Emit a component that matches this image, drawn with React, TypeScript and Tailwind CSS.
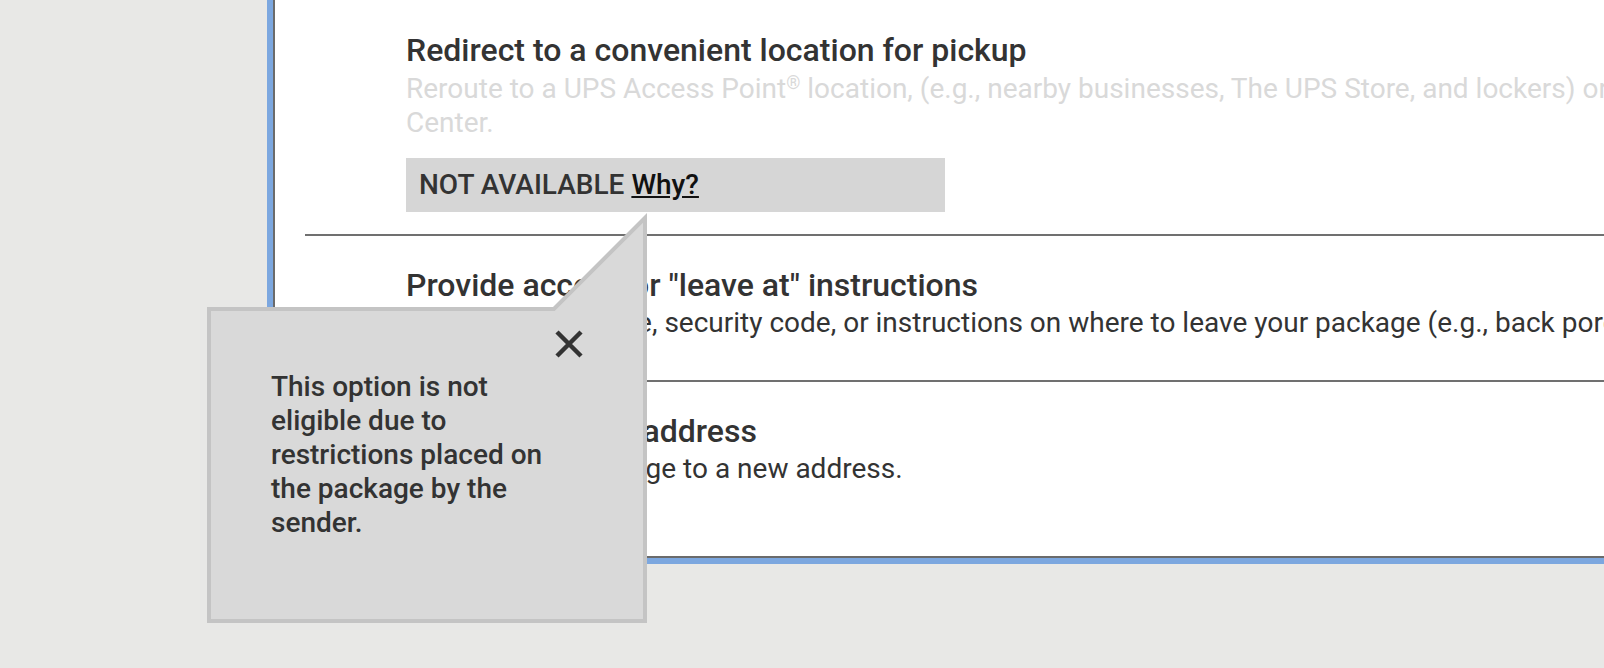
import React from 'react'

const font = { fontFamily: 'Roboto, "Noto Sans", Arial, sans-serif' }

interface OptionProps {
  title: string
  children: React.ReactNode
  last?: boolean
  className?: string
}

function Option({ title, children, last, className }: OptionProps) {
  return (
    <div className={`pl-[101px] ${last ? '' : 'border-b-2 border-[#707070]'} ${className ?? ''}`}>
      <div className="text-[32px] leading-[38px] font-medium text-[#333333] whitespace-nowrap">{title}</div>
      {children}
    </div>
  )
}

function CloseIcon() {
  return (
    <svg width="28" height="28" viewBox="0 0 28 28">
      <path d="M2 2 L26 26 M26 2 L2 26" stroke="#333333" strokeWidth="4.5" fill="none" />
    </svg>
  )
}

function WhyPopover() {
  return (
    <div className="absolute left-[207px] top-[213px] w-[440px]">
      <svg className="absolute right-0 top-0" width="98" height="98" viewBox="0 0 98 98">
        <polygon points="0,98 98,98 98,0" fill="#c4c4c4" />
        <polygon points="5.7,98 94,98 94,9.7" fill="#d9d9d9" />
      </svg>
      <div className="mt-[94px] h-[316px] border-4 border-[#c4c4c4] bg-[#d9d9d9] pl-[60px] pt-[59px]">
        <button className="absolute right-[64px] top-[117px]">
          <CloseIcon />
        </button>
        <p className="w-[290px] text-[28px] leading-[34px] font-medium text-[#333333]">
          This option is not eligible due to restrictions placed on the package by the sender.
        </p>
      </div>
    </div>
  )
}

export default function App() {
  return (
    <div className="relative w-[1604px] h-[668px] overflow-hidden bg-[#e8e8e6]" style={font}>
      <div className="ml-[267px] w-[1700px] bg-[#7ca7df] pl-[6px] pb-[6px]">
        <div className="bg-white border-l-2 border-b-2 border-[#6b6b6b] pl-[30px] pt-[31px]">
          <Option title="Redirect to a convenient location for pickup" className="pb-[22px]">
            <p className="mt-[3px] w-[1460px] text-[28px] leading-[34px] text-[#d9d9d9]">
              Reroute to a UPS Access Point<sup className="text-[18px]">®</sup> location, (e.g., nearby
              businesses, The UPS Store, and lockers) or a UPS Customer Center.
            </p>
            <div className="mt-[18px] flex h-[54px] w-[539px] items-center bg-[#d6d6d6] pl-[13px] text-[28px] font-medium text-[#333333]">
              NOT AVAILABLE&nbsp;
              <a href="#" className="text-[#111111] underline underline-offset-2">
                Why?
              </a>
            </div>
          </Option>
          <Option title={'Provide access or "leave at" instructions'} className="pt-[30px] pb-[40px]">
            <p className="mt-[2px] text-[28px] leading-[34px] text-[#333333] whitespace-nowrap">
              Provide a gate code, security code, or instructions on where to leave your package
              (e.g., back porch, side door).
            </p>
          </Option>
          <Option title="Change delivery address" last className="pt-[30px] pb-[70px]">
            <p className="mt-[2px] text-[28px] leading-[34px] text-[#333333]">
              Reroute your package to a new address.
            </p>
          </Option>
        </div>
      </div>
      <WhyPopover />
    </div>
  )
}
